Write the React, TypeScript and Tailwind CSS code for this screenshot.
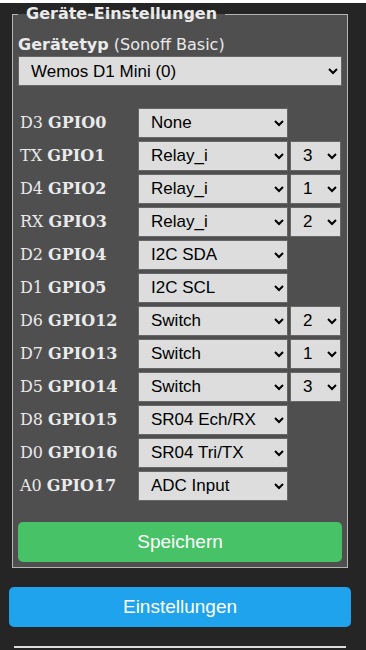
import React from 'react'

const rows: [string, string, string, string | null][] = [
  ['D3', 'GPIO0', 'None', null],
  ['TX', 'GPIO1', 'Relay_i', '3'],
  ['D4', 'GPIO2', 'Relay_i', '1'],
  ['RX', 'GPIO3', 'Relay_i', '2'],
  ['D2', 'GPIO4', 'I2C SDA', null],
  ['D1', 'GPIO5', 'I2C SCL', null],
  ['D6', 'GPIO12', 'Switch', '2'],
  ['D7', 'GPIO13', 'Switch', '1'],
  ['D5', 'GPIO14', 'Switch', '3'],
  ['D8', 'GPIO15', 'SR04 Ech/RX', null],
  ['D0', 'GPIO16', 'SR04 Tri/TX', null],
  ['A0', 'GPIO17', 'ADC Input', null],
]

const sel =
  "bg-[#dddddd] text-black border border-[#666] h-[30px] pl-[8px] text-[17px] font-['Liberation_Sans',Arial,sans-serif] outline-none"

function App() {
  return (
    <div className="min-h-screen bg-[#252525] pl-[9px] pr-[15px] pb-4">
      <fieldset className="mx-[3px] border border-[#b4b4b4] bg-[#4f4f4f] px-[5px] pb-[5px] mt-[3px]">
        <legend className="px-[8px] text-[16px] leading-[22px] font-bold text-[#eaeaea] font-['DejaVu_Sans',Verdana,sans-serif]">
          Geräte-Einstellungen
        </legend>
        <div className="pt-[10px] text-[16px] leading-[20px] text-[#eaeaea] font-['DejaVu_Sans',Verdana,sans-serif]">
          <b>Gerätetyp</b> (Sonoff Basic)
        </div>
        <select className={sel + ' w-full mt-[1px]'} defaultValue="w">
          <option value="w">Wemos D1 Mini (0)</option>
        </select>
        <div className="mt-[20px]">
          {rows.map(([pin, gpio, val, num]) => (
            <div key={gpio} className="flex items-center h-[33px]">
              <div className="w-[120px] pl-[2px] text-[16px] text-[#eaeaea] font-['DejaVu_Serif',Georgia,serif]">
                {pin} <b>{gpio}</b>
              </div>
              <select className={sel + ' w-[150px]'} defaultValue={val}>
                <option value={val}>{val}</option>
              </select>
              {num && (
                <select className={sel + ' w-[51px] ml-[2px]'} defaultValue={num}>
                  <option value={num}>{num}</option>
                </select>
              )}
            </div>
          ))}
        </div>
        <button className="mt-[20px] w-full h-[40px] rounded-[5px] bg-[#47c266] text-white text-[19px] font-['Liberation_Sans',Arial,sans-serif]">
          Speichern
        </button>
      </fieldset>
      <button className="mt-[19px] w-full h-[40px] rounded-[5px] bg-[#1fa3ec] text-white text-[19px] font-['Liberation_Sans',Arial,sans-serif]">
        Einstellungen
      </button>
      <div className="mx-[5px] mt-[19px] border-t-2 border-[#dddddd]" />
    </div>
  )
}

export default App
